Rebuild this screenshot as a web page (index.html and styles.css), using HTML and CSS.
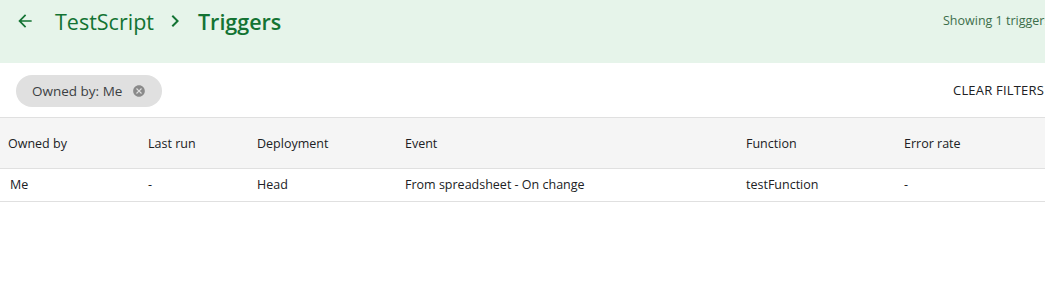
FILE: index.html
```html
<!DOCTYPE html>
<html lang="en">
<head>
  <meta charset="UTF-8">
  <title>Triggers</title>
  <link rel="stylesheet" href="styles.css">
</head>
<body>

  <header class="topbar">
    <div class="crumbs">
      <button class="back" aria-label="Back">
        <svg width="20" height="20" viewBox="0 0 24 24"><path d="M20 11H7.83l5.59-5.59L12 4l-8 8 8 8 1.41-1.41L7.83 13H20v-2z" fill="currentColor"/></svg>
      </button>
      <span class="project">TestScript</span>
      <svg class="chev" width="24" height="24" viewBox="0 0 24 24"><path d="M10 6L8.59 7.41 13.17 12l-4.58 4.59L10 18l6-6z" fill="currentColor"/></svg>
      <span class="page">Triggers</span>
    </div>
    <div class="count">Showing 1 triggers</div>
  </header>

  <div class="filters">
    <span class="chip">
      Owned by: Me
      <svg class="chip-x" width="14" height="14" viewBox="0 0 24 24"><path d="M12 2C6.47 2 2 6.470 2 12s4.47 10 10 10 10-4.47 10-10S17.53 2 12 2zm5 13.59L15.59 17 12 13.41 8.41 17 7 15.59 10.59 12 7 8.41 8.41 7 12 10.59 15.59 7 17 8.41 13.41 12 17 15.59z" fill="currentColor"/></svg>
    </span>
    <button class="clear">CLEAR FILTERS</button>
  </div>

  <table class="triggers">
    <thead>
      <tr>
        <th class="c-owner">Owned by</th>
        <th class="c-run">Last run</th>
        <th class="c-dep">Deployment</th>
        <th class="c-event">Event</th>
        <th class="c-fn">Function</th>
        <th class="c-err">Error rate</th>
      </tr>
    </thead>
    <tbody>
      <tr>
        <td class="c-owner me">Me</td>
        <td>-</td>
        <td>Head</td>
        <td>From spreadsheet - On change</td>
        <td>testFunction</td>
        <td>-</td>
      </tr>
    </tbody>
  </table>

</body>
</html>
```

FILE: styles.css
```css
* {
  box-sizing: border-box;
}
body {
  margin: 0;
  width: 1045px;
  overflow: hidden;
  font-family: 'Open Sans', Roboto, sans-serif;
  color: #202124;
  background: #fff;
}
.topbar {
  height: 63px;
  background: #e6f4ea;
  display: flex;
  justify-content: space-between;
  padding: 0 0 0 15px;
  white-space: nowrap;
}
.crumbs {
  display: flex;
  align-items: center;
  height: 42px;
  color: #137333;
}
.back {
  background: none;
  border: none;
  padding: 0;
  color: #137333;
  display: flex;
  margin-right: 20px;
}
.project {
  font-size: 21.5px;
}
.chev {
  margin: 0 11px 0 9px;
}
.page {
  font-size: 21.5px;
  font-weight: 600;
}
.count {
  font-size: 12.5px;
  color: #3c6e4a;
  width: 102px;
  overflow: hidden;
  padding-top: 12px;
}
.filters {
  height: 55px;
  display: flex;
  align-items: center;
  justify-content: space-between;
  padding-left: 16px;
  border-bottom: 1px solid #e0e0e0;
  white-space: nowrap;
}
.chip {
  display: inline-flex;
  align-items: center;
  height: 32px;
  padding: 0 16px;
  border-radius: 16px;
  background: #e0e0e0;
  font-size: 13.5px;
  color: #3c4043;
  gap: 10px;
  margin-top: 2px;
}
.chip-x {
  color: #8a8a8a;
}
.clear {
  background: none;
  border: none;
  font-family: inherit;
  font-size: 13px;
  font-weight: 500;
  letter-spacing: 0.2px;
  color: #202124;
  padding: 0;
  width: 92px;
  overflow: hidden;
  text-align: left;
}
.triggers {
  width: 100%;
  border-collapse: collapse;
  font-size: 12.5px;
  color: #202124;
}
.triggers th {
  background: #f5f5f5;
  font-weight: 400;
  text-align: left;
  height: 50px;
  padding: 2px 0 0 8px;
  border-bottom: 1px solid #e0e0e0;
}
.triggers td {
  height: 33px;
  padding: 0 0 0 8px;
  border-bottom: 1px solid #e0e0e0;
}
.triggers td.me {
  padding-left: 10px;
}
.c-owner { width: 140px; }
.c-run { width: 109px; }
.c-dep { width: 148px; }
.c-event { width: 341px; }
.c-fn { width: 158px; }
```
